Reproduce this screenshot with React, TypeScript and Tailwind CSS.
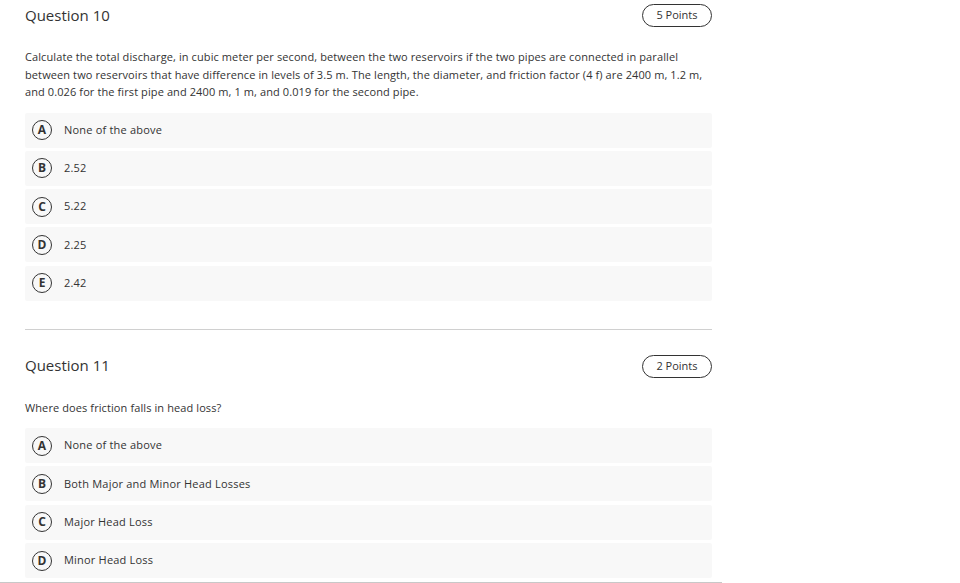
const questions = [
  {
    title: 'Question 10',
    points: '5 Points',
    text: 'Calculate the total discharge, in cubic meter per second, between the two reservoirs if the two pipes are connected in parallel between two reservoirs that have difference in levels of 3.5 m. The length, the diameter, and friction factor (4 f) are 2400 m, 1.2 m, and 0.026 for the first pipe and 2400 m, 1 m, and 0.019 for the second pipe.',
    options: ['None of the above', '2.52', '5.22', '2.25', '2.42'],
  },
  {
    title: 'Question 11',
    points: '2 Points',
    text: 'Where does friction falls in head loss?',
    options: ['None of the above', 'Both Major and Minor Head Losses', 'Major Head Loss', 'Minor Head Loss'],
  },
]

const letters = ['A', 'B', 'C', 'D', 'E']

function Option({ letter, label }: { letter: string; label: string }) {
  return (
    <div className="flex items-center h-[35px] bg-[#f8f8f8] rounded-[2px] pl-[7px]">
      <span className="flex shrink-0 items-center justify-center w-[20px] h-[20px] rounded-full border border-[#333] text-[12px] font-bold text-[#333] leading-none">
        {letter}
      </span>
      <span className="ml-[12px] text-[11px] tracking-[0.2px] text-[#333]">{label}</span>
    </div>
  )
}

export default function App() {
  return (
    <div className="bg-white w-[960px] h-[583px] overflow-hidden" style={{ fontFamily: '"Open Sans", sans-serif' }}>
      <div className="w-[722px] border-b-2 border-[#c8c8c8]">
        <div className="pl-[25px] w-[712px]">
          {questions.map((q, i) => (
            <section key={q.title} className={i === 0 ? 'pt-[4px] pb-[28px] border-b border-[#d0d0d0]' : 'pt-[25px] pb-[4px]'}>
              <div className="flex items-center justify-between h-[23px]">
                <h2 className="text-[15px] text-[#333] -mt-[1px]">{q.title}</h2>
                <span className="flex items-center justify-center h-[23px] w-[70px] rounded-full border border-[#333] text-[11px] text-[#333]">
                  {q.points}
                </span>
              </div>
              <p className="mt-[21px] text-[11px] tracking-[0.1px] leading-[17.5px] text-[#333]">{q.text}</p>
              <div className="mt-[12px] flex flex-col gap-[3.3px]">
                {q.options.map((o, j) => (
                  <Option key={o} letter={letters[j]} label={o} />
                ))}
              </div>
            </section>
          ))}
        </div>
      </div>
    </div>
  )
}
